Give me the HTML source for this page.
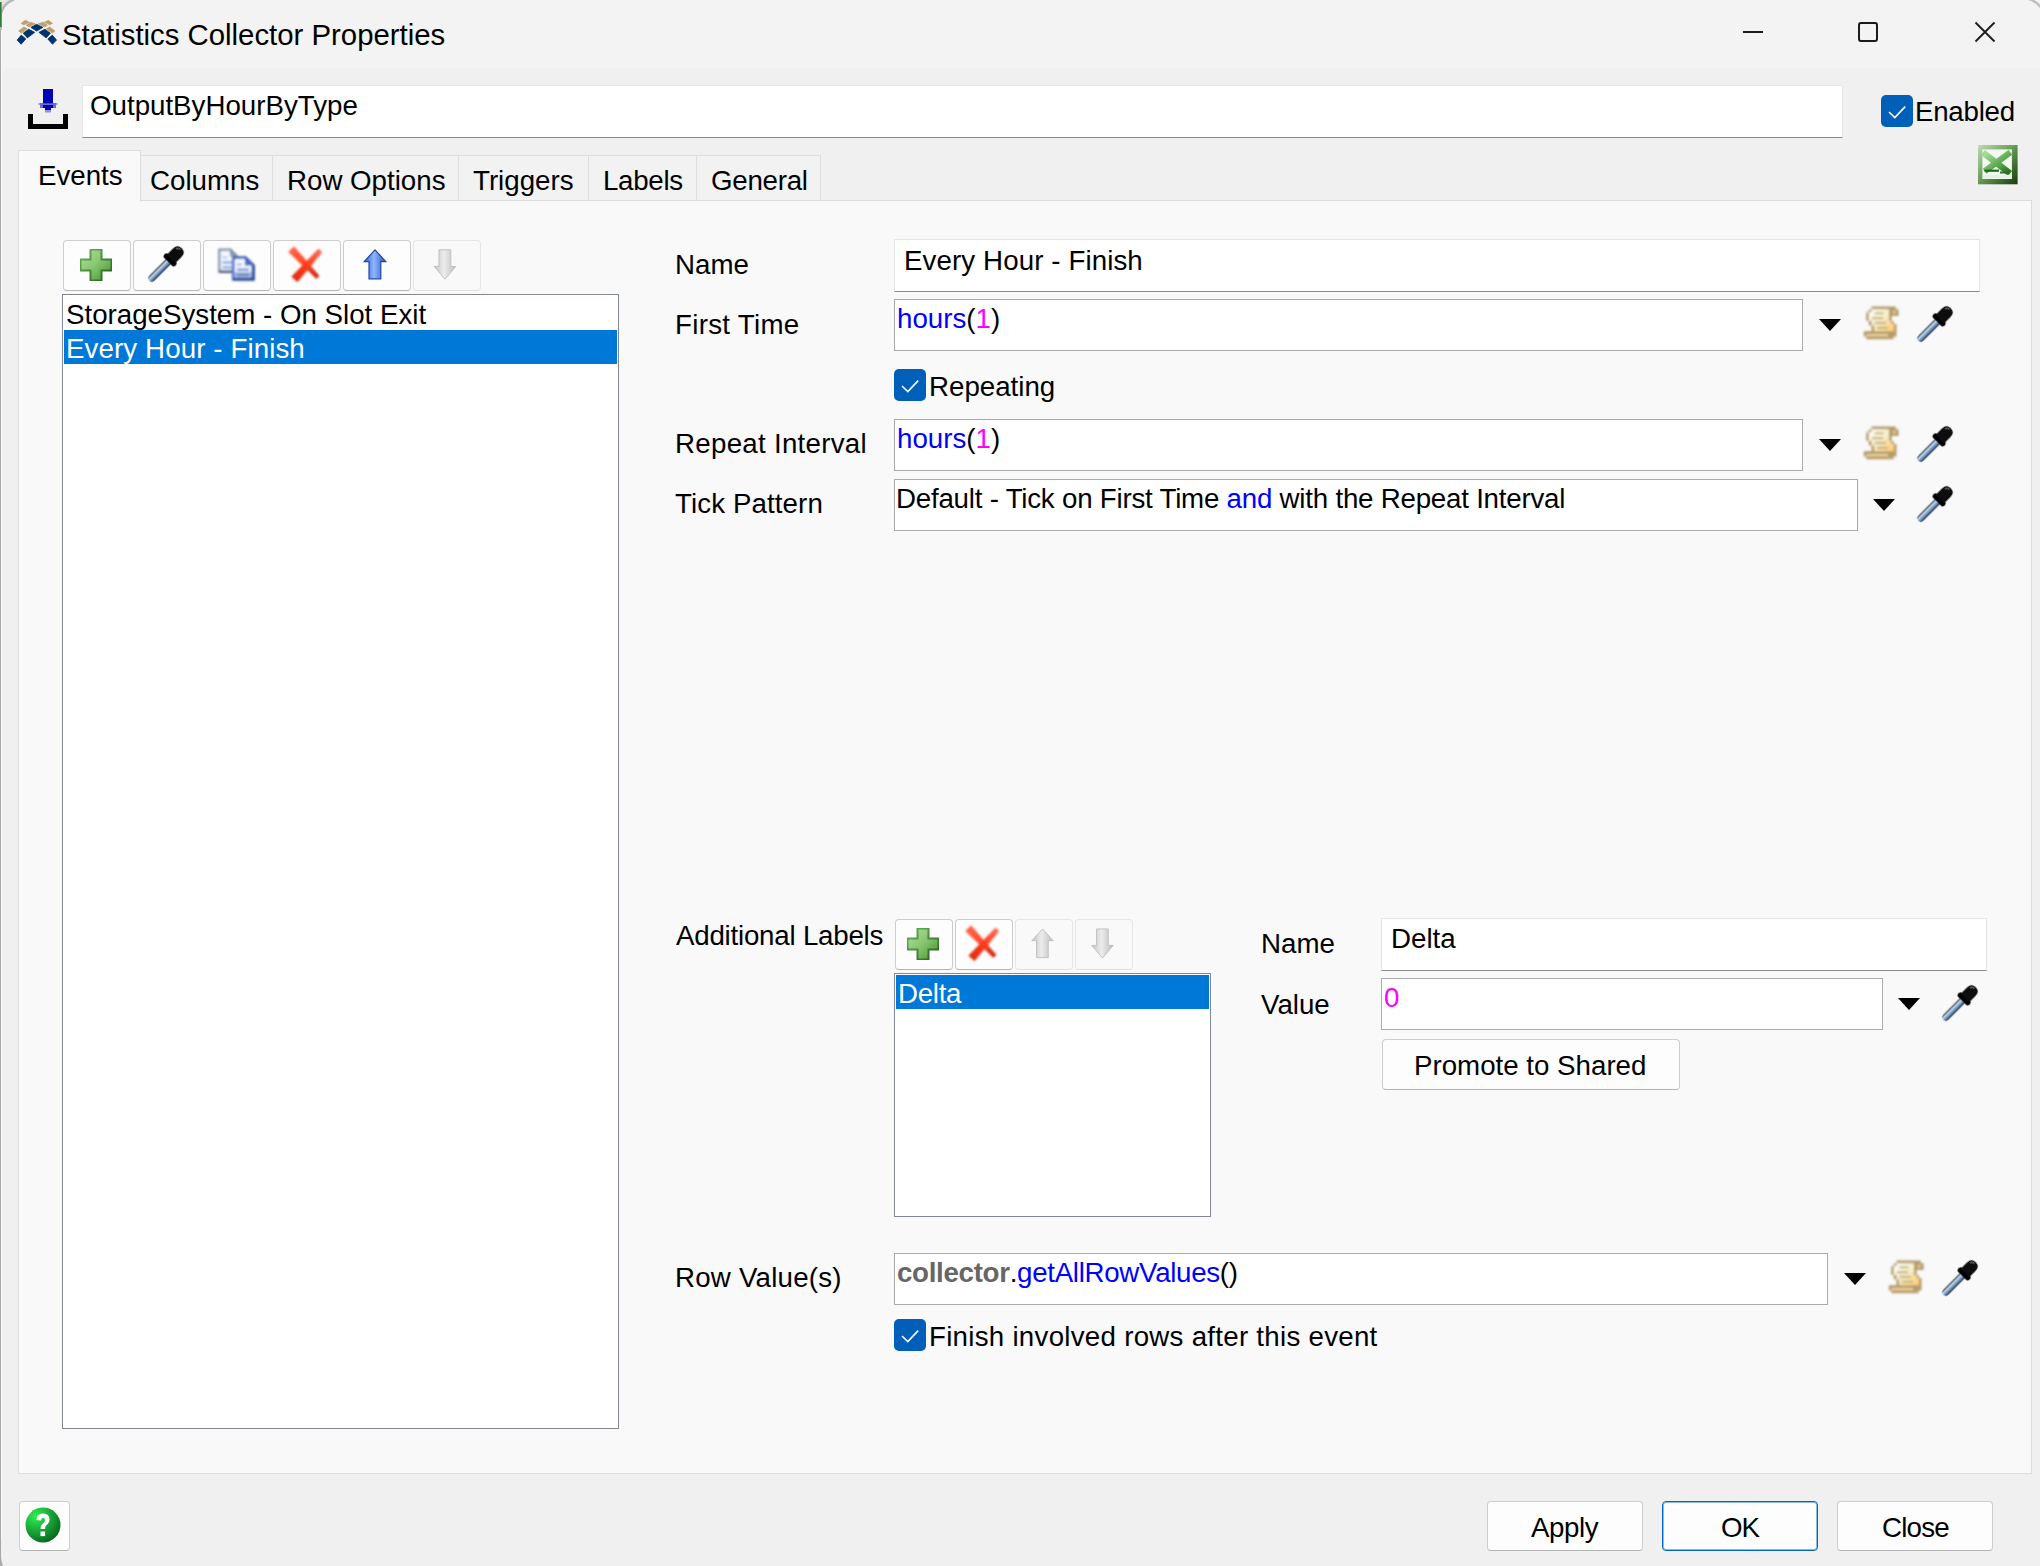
<!DOCTYPE html>
<html><head><meta charset="utf-8">
<style>
html,body{margin:0;padding:0;width:2040px;height:1566px;overflow:hidden;background:#f0f0f0;}
body{position:relative;font-family:"Liberation Sans",sans-serif;color:#000;}
.a{position:absolute;box-sizing:border-box;}
.t{position:absolute;white-space:pre;line-height:1;font-size:27.7px;}
.btn{position:absolute;box-sizing:border-box;background:#fdfdfd;border:1px solid #cdcdcd;border-bottom-color:#b4b4b4;border-radius:4px;}
.btn.dis{background:#f9f9f9;border-color:#e6e6e6;border-bottom-color:#e0e0e0;}
.fld{position:absolute;box-sizing:border-box;background:#fff;border:1px solid #a9a9ae;}
.fld2{position:absolute;box-sizing:border-box;background:#fff;border:1px solid #e5e5e5;border-bottom:1px solid #8a8a8a;}
.tab{position:absolute;box-sizing:border-box;background:#f2f2f2;border:1px solid #dedede;border-bottom:none;}
svg{position:absolute;overflow:visible;}
</style></head><body>

<svg width="0" height="0" style="position:absolute;left:0;top:0">
<defs>
  <linearGradient id="gPlus" x1="0" y1="0" x2="1" y2="1">
    <stop offset="0" stop-color="#b2e3a0"/><stop offset="0.5" stop-color="#86c46f"/><stop offset="1" stop-color="#3f9127"/>
  </linearGradient>
  <linearGradient id="gPlusB" x1="0" y1="0" x2="1" y2="1">
    <stop offset="0" stop-color="#66b85a"/><stop offset="1" stop-color="#2a5a1e"/>
  </linearGradient>
  <linearGradient id="gTube" x1="0" y1="0" x2="1" y2="0">
    <stop offset="0" stop-color="#3a4a5a"/><stop offset="0.35" stop-color="#c8d4e0"/><stop offset="0.6" stop-color="#6f9ad0"/><stop offset="1" stop-color="#2c3a4a"/>
  </linearGradient>
  <linearGradient id="gUp" x1="0" y1="0" x2="1" y2="0">
    <stop offset="0" stop-color="#2f5fc8"/><stop offset="0.45" stop-color="#8fb6ff"/><stop offset="1" stop-color="#2a55b8"/>
  </linearGradient>
  <linearGradient id="gGray" x1="0" y1="0" x2="1" y2="0">
    <stop offset="0" stop-color="#c4c4c4"/><stop offset="0.45" stop-color="#ececec"/><stop offset="1" stop-color="#bdbdbd"/>
  </linearGradient>
  <radialGradient id="gHelp" cx="0.3" cy="0.25" r="0.85">
    <stop offset="0" stop-color="#2ef052"/><stop offset="0.55" stop-color="#18a035"/><stop offset="1" stop-color="#05601a"/>
  </radialGradient>
  <linearGradient id="gXl" x1="0" y1="0" x2="1" y2="1">
    <stop offset="0" stop-color="#c0dcb8"/><stop offset="0.45" stop-color="#6aa05a"/><stop offset="1" stop-color="#1a3a0c"/>
  </linearGradient>
  <linearGradient id="gXg" x1="0" y1="0" x2="1" y2="1"><stop offset="0" stop-color="#a8d898"/><stop offset="0.6" stop-color="#5aaa50"/><stop offset="1" stop-color="#2a7a22"/></linearGradient>
  <linearGradient id="gScroll" x1="0" y1="0" x2="1" y2="1">
    <stop offset="0" stop-color="#ffffff"/><stop offset="0.5" stop-color="#f6ecc8"/><stop offset="1" stop-color="#ffc870"/>
  </linearGradient>
  <filter id="soft" x="-10%" y="-10%" width="120%" height="120%"><feGaussianBlur stdDeviation="0.55"/></filter>
  <linearGradient id="gX1" x1="0" y1="0" x2="1" y2="1"><stop offset="0" stop-color="#ff6a50"/><stop offset="0.5" stop-color="#ff4a2c"/><stop offset="1" stop-color="#c82810"/></linearGradient>
  <linearGradient id="gX2" x1="1" y1="0" x2="0" y2="1"><stop offset="0" stop-color="#ff7058"/><stop offset="0.5" stop-color="#ff3a1a"/><stop offset="1" stop-color="#d82a10"/></linearGradient>
  <filter id="soft2" x="-30%" y="-30%" width="160%" height="160%"><feGaussianBlur stdDeviation="0.8"/></filter>

  <symbol id="iPlus" viewBox="0 0 32 32">
    <path d="M10.5 0.5 H21.5 V10.5 H31.5 V21.5 H21.5 V31.5 H10.5 V21.5 H0.5 V10.5 H10.5 Z" fill="url(#gPlus)" stroke="url(#gPlusB)" stroke-width="2"/>
  </symbol>
  <symbol id="iDrop" viewBox="0 0 38 38" style="overflow:visible">
    <g transform="rotate(45 19 19)" filter="url(#soft2)">
      <path d="M15 13 L23 13 L23 39 Q23 44 19 44 Q15 44 15 39 Z" fill="url(#gTube)"/>
      <rect x="10.5" y="9" width="17" height="6" rx="2.5" fill="#050505"/>
      <path d="M12.5 11 L12.5 1 Q12.5 -6 19 -6 Q25.5 -6 25.5 1 L25.5 11 Z" fill="#0a0a0a"/>
      <path d="M15 -1 Q16 -4 19 -4" stroke="#666" stroke-width="1.5" fill="none"/>
    </g>
  </symbol>
  <symbol id="iCopy" viewBox="0 0 44 40" style="overflow:visible">
    <g filter="url(#soft2)">
    <path d="M5.3 5.8 H16.5 L22.5 11.8 V27.7 H5.3 Z" fill="#f4f7fc" stroke="#8898b0" stroke-width="2.4"/>
    <path d="M5.3 27.7 H18" stroke="#4c5a70" stroke-width="2.4"/>
    <path d="M16.5 5.8 V12 H22.5 Z" fill="#9aa8c0" stroke="#7888a0" stroke-width="1.2"/>
    <rect x="8.5" y="12.3" width="4.5" height="2.2" fill="#a8c8f8"/>
    <rect x="8.5" y="17.3" width="10" height="2.3" fill="#80a8e0"/>
    <rect x="8.5" y="22.2" width="10" height="2.3" fill="#80a8e0"/>
    <path d="M19.3 13.7 H31.5 L39.2 21 V35.1 H19.3 Z" fill="#f6f8ff" stroke="#3a60c0" stroke-width="2.8"/>
    <rect x="21" y="28" width="16.8" height="5.8" fill="#a8b8d8"/>
    <path d="M39.2 21 V35.1 H19.3" fill="none" stroke="#1f3f98" stroke-width="2.8"/>
    <path d="M20 15 V34" stroke="#90a8e0" stroke-width="1.2"/>
    <path d="M31.5 13.7 V20.8 H39.2 Z" fill="#5272c8" stroke="#3a5cb8" stroke-width="1.2"/>
    <rect x="23" y="19.5" width="4.5" height="2.1" fill="#90b0f8"/>
    <rect x="23" y="24.5" width="12" height="2.3" fill="#6890d8"/>
    <rect x="23" y="29.6" width="12" height="2.3" fill="#5a88d0"/>
    </g>
  </symbol>
  <symbol id="iX" viewBox="0 0 42 44" style="overflow:visible">
    <g filter="url(#soft2)">
    <path d="M4.96 9.90 L32.34 36.10 L34.66 33.90 L10.04 5.10 Z" fill="url(#gX1)" stroke="url(#gX1)" stroke-width="1.2" stroke-linejoin="round"/>
    <path d="M34.51 7.47 L8.19 34.67 L13.41 39.33 L37.49 10.13 Z" fill="url(#gX2)" stroke="url(#gX2)" stroke-width="1.2" stroke-linejoin="round"/>
    </g>
  </symbol>
  <symbol id="iUp" viewBox="0 0 24 32">
    <g filter="url(#soft)">
    <path d="M12 0.8 L23.2 13 H18 V30.8 H5.8 V13 H0.8 Z" fill="url(#gUp)" stroke="#1f46a8" stroke-width="1.2"/>
    </g>
  </symbol>
  <symbol id="iUpG" viewBox="0 0 24 32">
    <g filter="url(#soft)">
    <path d="M12 0.8 L23.2 13 H18 V30.8 H5.8 V13 H0.8 Z" fill="url(#gGray)" stroke="#c0c0c0" stroke-width="1"/>
    </g>
  </symbol>
  <symbol id="iDownG" viewBox="0 0 24 32">
    <g filter="url(#soft)">
    <path d="M12 31.2 L23.2 18 H18 V0.8 H5.8 V18 H0.8 Z" fill="url(#gGray)" stroke="#c0c0c0" stroke-width="1"/>
    </g>
  </symbol>
  <symbol id="iTri" viewBox="0 0 22 12">
    <path d="M0 0 H22 L11 12 Z" fill="#000"/>
  </symbol>
  <symbol id="iScroll" viewBox="0 0 42 42" style="overflow:visible">
    <g filter="url(#soft2)">
    <path d="M11.5 4.6 H35.7 V7.2 H38.6 V13.9 H31.6 V19.3 H34 V22 H36.5 V34.6 H33.5 V37.3 H6.5 V34.6 H3.8 V29.2 H11.5 V23.6 H8.8 V18.8 H6.2 V10.2 H8.8 V7.5 H11.5 Z" fill="#b49c6c"/>
    <path d="M11.5 7.2 H29 V19.3 H31.6 V22 H33.9 V29.2 H14.2 V23.6 H11.5 V18.8 H8.8 V10.2 H11.5 Z" fill="url(#gScroll)"/>
    <rect x="32.5" y="8.5" width="3.5" height="3.5" fill="#dcc088"/>
    <rect x="14.5" y="10.2" width="9" height="2.1" fill="#c8b888"/>
    <rect x="12" y="15" width="11" height="2.2" fill="#c6b684"/>
    <rect x="14.5" y="19.8" width="11.5" height="2.2" fill="#c6b684"/>
    <rect x="17" y="24.7" width="11" height="2.3" fill="#c6b684"/>
    <rect x="6.5" y="32.2" width="21.5" height="1.8" fill="#f2dca2"/>
    <rect x="6.5" y="34.2" width="26" height="2.2" fill="#c0a070"/>
    </g>
  </symbol>
  <symbol id="iChk" viewBox="0 0 32 32">
    <rect x="0" y="0" width="32" height="32" rx="5" fill="#005fb8"/>
    <path d="M8 17 L13.8 22.6 L24.2 11.6" stroke="#fff" stroke-width="1.6" fill="none"/>
  </symbol>
</defs>
</svg>

<!-- window frame -->
<div class="a" style="left:0;top:0;width:2040px;height:68px;background:#f3f3f3;"></div>
<div class="a" style="left:0;top:0;width:1px;height:1566px;background:#a9a9a9;"></div>
<div class="a" style="left:1px;top:0;width:1px;height:1566px;background:#fafafa;"></div>

<!-- title -->
<svg style="left:14px;top:17px" width="48" height="30" viewBox="0 0 48 30"><g filter="url(#soft)">
  <path d="M11.3 3.3 L15.1 5.2 L9.9 7.8 L7.1 6.4 Z M16.5 5.2 L21.2 6.8 L15.1 9.9 L12.2 8.2 Z M9.9 10.1 L13.2 11.8 L7.3 16.0 L4.7 13.9 Z M34.3 3.3 L30.5 5.2 L35.7 7.8 L38.5 6.4 Z M29.1 5.2 L24.4 6.8 L30.5 9.9 L33.4 8.2 Z M35.7 10.1 L32.4 11.8 L38.3 16.0 L40.9 13.9 Z" fill="#bfa06c" stroke="#bfa06c" stroke-width="0.8" stroke-linejoin="round"/>
  <path d="M22.6 7.3 L28.9 10.4 L22.6 14.1 L16.9 10.4 Z M14.6 12.2 L20.7 15.3 L13.4 20.9 L9.2 16.2 Z M7.3 18.1 L11.8 21.9 L7.1 27.3 L3.1 23.1 Z M31.0 12.2 L24.9 15.3 L32.2 20.9 L36.4 16.2 Z M38.3 18.1 L33.8 21.9 L38.5 27.3 L42.5 23.1 Z" fill="#00336c" stroke="#00336c" stroke-width="0.8" stroke-linejoin="round"/>
</g></svg>
<div class="t" style="left:62px;top:20px;font-size:29.35px;">Statistics Collector Properties</div>

<!-- window controls -->
<div class="a" style="left:1743px;top:31px;width:20px;height:2px;background:#1a1a1a;"></div>
<div class="a" style="left:1858px;top:22px;width:20px;height:20px;border:2px solid #1a1a1a;border-radius:3px;"></div>
<svg style="left:1975px;top:22px" width="20" height="20" viewBox="0 0 20 20"><path d="M0.5 0.5 L19.5 19.5 M19.5 0.5 L0.5 19.5" stroke="#1a1a1a" stroke-width="1.8"/></svg>

<!-- header row -->
<svg style="left:28px;top:88px" width="41" height="41" viewBox="0 0 41 41">
  <rect x="15" y="1" width="10" height="15" fill="#0000b4"/>
  <rect x="11.5" y="15" width="17" height="2" fill="#3030c0" opacity="0.75"/>
  <rect x="10" y="15" width="20" height="2" fill="#8080d8" opacity="0.4"/>
  <rect x="12" y="17" width="16" height="3" fill="#0000b4" opacity="0.55"/>
  <rect x="15" y="17" width="10" height="3" fill="#0000b4"/>
  <rect x="17" y="20" width="6" height="2" fill="#0000b4"/>
  <rect x="17" y="22" width="6" height="2.5" fill="#6a6ad0" opacity="0.7"/>
  <path d="M0 26 H5 V36 H35 V26 H40 V41 H0 Z" fill="#000"/>
</svg>
<div class="fld2" style="left:82px;top:85px;width:1761px;height:53px;"></div>
<div class="t" style="left:90px;top:92px;">OutputByHourByType</div>

<svg style="left:1881px;top:95px" width="32" height="32"><use href="#iChk"/></svg>
<div class="t" style="left:1915px;top:98px;letter-spacing:-0.25px;">Enabled</div>

<!-- excel icon -->
<svg style="left:1978px;top:145px" width="40" height="40" viewBox="0 0 40 40"><g filter="url(#soft)">
  <rect x="0" y="0" width="39.6" height="39.3" fill="url(#gXl)"/>
  <rect x="4.4" y="4.4" width="29.5" height="29.6" fill="#f2f9ef"/>
  <path d="M7.5 9.5 L29.5 26.5" stroke="url(#gXg)" stroke-width="6.5" stroke-linecap="square"/>
  <path d="M30 9 L9 24.5" stroke="url(#gXg)" stroke-width="6" stroke-linecap="square"/>
  <rect x="6.5" y="24.6" width="14.5" height="2.2" fill="#1f6a1a"/>
  <rect x="22" y="26.5" width="10" height="2" fill="#3a6a30"/>
  <rect x="4.8" y="29.8" width="28.6" height="3.4" fill="#e4f2e0"/>
</g></svg>

<!-- tabs -->
<div class="a" style="left:18px;top:200px;width:2014px;height:1274px;background:#f9f9f9;border:1px solid #dedede;"></div>
<div class="tab" style="left:140px;top:155px;width:133px;height:45px;"></div>
<div class="tab" style="left:272px;top:155px;width:187px;height:45px;"></div>
<div class="tab" style="left:458px;top:155px;width:131px;height:45px;"></div>
<div class="tab" style="left:588px;top:155px;width:109px;height:45px;"></div>
<div class="tab" style="left:696px;top:155px;width:125px;height:45px;"></div>
<div class="a" style="left:18px;top:150px;width:123px;height:52px;background:#f9f9f9;border:1px solid #dedede;border-bottom:none;"></div>
<div class="t" style="left:38px;top:162px;">Events</div>
<div class="t" style="left:150px;top:167px;">Columns</div>
<div class="t" style="left:287px;top:167px;">Row Options</div>
<div class="t" style="left:473px;top:167px;">Triggers</div>
<div class="t" style="left:603px;top:167px;letter-spacing:-0.3px;">Labels</div>
<div class="t" style="left:711px;top:167px;letter-spacing:-0.25px;">General</div>

<!-- left toolbar -->
<div class="btn" style="left:63px;top:240px;width:68px;height:51px;"></div>
<div class="btn" style="left:133px;top:240px;width:68px;height:51px;"></div>
<div class="btn" style="left:203px;top:240px;width:68px;height:51px;"></div>
<div class="btn" style="left:273px;top:240px;width:68px;height:51px;"></div>
<div class="btn" style="left:343px;top:240px;width:68px;height:51px;"></div>
<div class="btn dis" style="left:413px;top:240px;width:68px;height:51px;"></div>

<!-- listbox -->
<div class="a" style="left:62px;top:294px;width:557px;height:1135px;background:#fff;border:1px solid #828790;"></div>
<div class="t" style="left:66px;top:301px;">StorageSystem - On Slot Exit</div>
<div class="a" style="left:64px;top:330px;width:553px;height:34px;background:#0078d7;"></div>
<div class="t" style="left:66px;top:335px;color:#fff;letter-spacing:0.1px;">Every Hour - Finish</div>

<!-- right form -->
<div class="t" style="left:675px;top:251px;">Name</div>
<div class="fld2" style="left:894px;top:239px;width:1086px;height:53px;"></div>
<div class="t" style="left:904px;top:247px;letter-spacing:0.1px;">Every Hour - Finish</div>

<div class="t" style="left:675px;top:311px;letter-spacing:0.3px;">First Time</div>
<div class="fld" style="left:894px;top:299px;width:909px;height:52px;"></div>
<div class="t" style="left:897px;top:305px;"><span style="color:#0000ff">hours</span>(<span style="color:#ff00ff">1</span>)</div>

<svg style="left:894px;top:369px" width="32" height="32"><use href="#iChk"/></svg>
<div class="t" style="left:929px;top:373px;">Repeating</div>

<div class="t" style="left:675px;top:430px;letter-spacing:0.28px;">Repeat Interval</div>
<div class="fld" style="left:894px;top:419px;width:909px;height:52px;"></div>
<div class="t" style="left:897px;top:425px;"><span style="color:#0000ff">hours</span>(<span style="color:#ff00ff">1</span>)</div>

<div class="t" style="left:675px;top:490px;letter-spacing:0.1px;">Tick Pattern</div>
<div class="fld" style="left:894px;top:479px;width:964px;height:52px;"></div>
<div class="t" style="left:896px;top:485px;letter-spacing:-0.22px;">Default - Tick on First Time <span style="color:#0000ff">and</span> with the Repeat Interval</div>

<!-- additional labels -->
<div class="t" style="left:676px;top:922px;letter-spacing:-0.22px;">Additional Labels</div>
<div class="btn" style="left:895px;top:919px;width:58px;height:51px;"></div>
<div class="btn" style="left:955px;top:919px;width:58px;height:51px;"></div>
<div class="btn dis" style="left:1015px;top:919px;width:58px;height:51px;"></div>
<div class="btn dis" style="left:1075px;top:919px;width:58px;height:51px;"></div>
<div class="a" style="left:894px;top:973px;width:317px;height:244px;background:#fff;border:1px solid #828790;"></div>
<div class="a" style="left:896px;top:975px;width:313px;height:34px;background:#0078d7;"></div>
<div class="t" style="left:898px;top:980px;color:#fff;letter-spacing:-0.3px;">Delta</div>

<div class="t" style="left:1261px;top:930px;">Name</div>
<div class="fld2" style="left:1381px;top:918px;width:606px;height:53px;"></div>
<div class="t" style="left:1391px;top:925px;">Delta</div>
<div class="t" style="left:1261px;top:991px;">Value</div>
<div class="fld" style="left:1381px;top:978px;width:502px;height:52px;"></div>
<div class="t" style="left:1384px;top:984px;color:#ff00ff;">0</div>
<div class="btn" style="left:1382px;top:1039px;width:298px;height:51px;"></div>
<div class="t" style="left:1414px;top:1052px;">Promote to Shared</div>

<!-- row values -->
<div class="t" style="left:675px;top:1264px;letter-spacing:0.22px;">Row Value(s)</div>
<div class="fld" style="left:894px;top:1253px;width:934px;height:52px;"></div>
<div class="t" style="left:897px;top:1259px;letter-spacing:-0.3px;"><b style="color:#666">collector</b>.<span style="color:#0000ff">getAllRowValues</span>()</div>
<svg style="left:894px;top:1319px" width="32" height="32"><use href="#iChk"/></svg>
<div class="t" style="left:929px;top:1323px;letter-spacing:0.27px;">Finish involved rows after this event</div>

<!-- bottom -->
<div class="btn" style="left:19px;top:1501px;width:51px;height:50px;"></div>
<div class="btn" style="left:1487px;top:1501px;width:156px;height:50px;"></div>
<div class="t" style="left:1531px;top:1514px;letter-spacing:-0.4px;">Apply</div>
<div class="btn" style="left:1662px;top:1501px;width:156px;height:50px;border:1px solid #0067c0;box-shadow:inset 0 0 0 1px rgba(0,103,192,0.45);"></div>
<div class="t" style="left:1721px;top:1514px;letter-spacing:-1.1px;">OK</div>
<div class="btn" style="left:1837px;top:1501px;width:156px;height:50px;"></div>
<div class="t" style="left:1882px;top:1514px;letter-spacing:-0.8px;">Close</div>

<svg style="left:79.5px;top:248.5px" width="32" height="32"><use href="#iPlus" width="32" height="32"/></svg>
<svg style="left:148.0px;top:246.5px" width="35" height="35"><use href="#iDrop" width="35" height="35"/></svg>
<svg style="left:214px;top:244px" width="44" height="40"><use href="#iCopy" width="44" height="40"/></svg>
<svg style="left:284px;top:242px" width="42" height="44"><use href="#iX" width="42" height="44"/></svg>
<svg style="left:363px;top:248.5px" width="24" height="31"><use href="#iUp" width="24" height="31"/></svg>
<svg style="left:433px;top:248.5px" width="24" height="31"><use href="#iDownG" width="24" height="31"/></svg>
<svg style="left:906.5px;top:927.5px" width="32" height="32"><use href="#iPlus" width="32" height="32"/></svg>
<svg style="left:961px;top:921px" width="42" height="44"><use href="#iX" width="42" height="44"/></svg>
<svg style="left:1030.5px;top:927.5px" width="23" height="31"><use href="#iUpG" width="23" height="31"/></svg>
<svg style="left:1090.5px;top:927.5px" width="23" height="31"><use href="#iDownG" width="23" height="31"/></svg>
<svg style="left:1819px;top:319px" width="22" height="12"><use href="#iTri" width="22" height="12"/></svg>
<svg style="left:1819px;top:439px" width="22" height="12"><use href="#iTri" width="22" height="12"/></svg>
<svg style="left:1873px;top:499px" width="22" height="12"><use href="#iTri" width="22" height="12"/></svg>
<svg style="left:1898px;top:998px" width="22" height="12"><use href="#iTri" width="22" height="12"/></svg>
<svg style="left:1844px;top:1273px" width="22" height="12"><use href="#iTri" width="22" height="12"/></svg>
<svg style="left:1860.0px;top:302px" width="42" height="42"><use href="#iScroll" width="42" height="42"/></svg>
<svg style="left:1860.0px;top:422px" width="42" height="42"><use href="#iScroll" width="42" height="42"/></svg>
<svg style="left:1885.0px;top:1256px" width="42" height="42"><use href="#iScroll" width="42" height="42"/></svg>
<svg style="left:1917.0px;top:306.5px" width="35" height="35"><use href="#iDrop" width="35" height="35"/></svg>
<svg style="left:1917.0px;top:426.5px" width="35" height="35"><use href="#iDrop" width="35" height="35"/></svg>
<svg style="left:1917.0px;top:486.5px" width="35" height="35"><use href="#iDrop" width="35" height="35"/></svg>
<svg style="left:1942.0px;top:985.5px" width="35" height="35"><use href="#iDrop" width="35" height="35"/></svg>
<svg style="left:1942.0px;top:1260.5px" width="35" height="35"><use href="#iDrop" width="35" height="35"/></svg>
<svg style="left:25px;top:1507px" width="36" height="36" viewBox="0 0 36 36"><g filter="url(#soft)"><circle cx="18" cy="18" r="17.5" fill="url(#gHelp)"/>
<path d="M11.5 13 Q11.5 6.5 18 6.5 Q24.5 6.5 24.5 12.5 Q24.5 16 21 18.5 Q20 19.5 20 22 H15.5 Q15.5 18 18.5 16 Q20 15 20 13 Q20 11 18 11 Q16 11 16 13.5 Z" fill="#fff"/>
<rect x="15.5" y="24.5" width="4.6" height="4.6" fill="#fff"/></g></svg>
<!-- corners -->
<svg style="left:0;top:0" width="24" height="30" viewBox="0 0 24 30">
  <path d="M0 0 H13.8 A20 20 0 0 0 0.9 13 L0.5 28 H0 Z" fill="#e2e6e2"/>
  <path d="M14 -0.5 A20 20 0 0 0 1 13.5 L0.6 30" fill="none" stroke="#b8b8b8" stroke-width="2.6"/>
  <path d="M15 2.2 A18 18 0 0 0 2.9 14 L2.5 30" fill="none" stroke="#fafafa" stroke-width="1"/>
  <rect x="0" y="2" width="1.6" height="25" fill="#2f7a3f"/>
</svg>
<svg style="left:2026px;top:0" width="14" height="8" viewBox="0 0 14 8">
  <path d="M2 -1 A22 22 0 0 1 16 9" fill="none" stroke="#bdbdbd" stroke-width="2.2"/>
</svg>
<svg style="left:0;top:1540px" width="12" height="26" viewBox="0 0 12 26">
  <path d="M0.5 0 V17 Q1 24 3 28" fill="none" stroke="#a9a9a9" stroke-width="1.3"/>
</svg>
</body></html>
